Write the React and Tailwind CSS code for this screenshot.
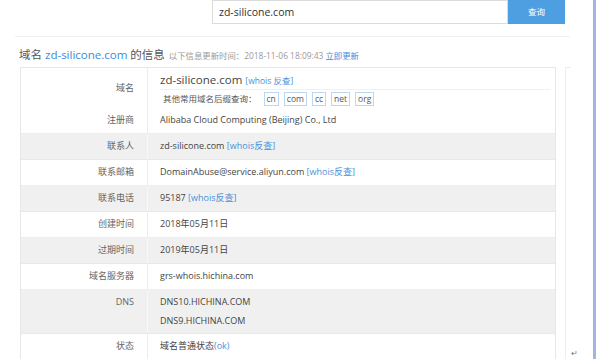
import React from 'react';

const FONT = { fontFamily: '"Open Sans", "Noto Sans CJK SC", sans-serif' };

const rows = [
    { label: '联系人', bg: 'gray', value: <>zd-silicone.com <Link>[whois反查]</Link></> },
    { label: '联系邮箱', bg: 'white', value: <>DomainAbuse@service.aliyun.com <Link>[whois反查]</Link></> },
    { label: '联系电话', bg: 'gray', value: <>95187 <Link>[whois反查]</Link></> },
    { label: '创建时间', bg: 'white', value: '2018年05月11日' },
    { label: '过期时间', bg: 'gray', value: '2019年05月11日' },
    { label: '域名服务器', bg: 'white', value: 'grs-whois.hichina.com' },
];

function Link({ children }) {
    return <span className="text-[#4a90d9]">{children}</span>;
}

function Row({ label, bg, children, tall }) {
    const gray = bg === 'gray';
    return (
        <div className={`flex border-b ${gray ? 'bg-[#f0f0f0] border-[#e9e9e9]' : 'bg-white border-[#eeeeee]'}`}>
            <div
                className={`w-[127px] shrink-0 border-r pr-[13px] text-right text-[9px] text-[#666] ${gray ? 'border-[#f8f8f8]' : 'border-[#ececec]'} ${tall ? 'pt-[2px] leading-[19px]' : 'pb-[1px] leading-[24px]'}`}
            >
                {label}
            </div>
            <div className={`pl-[12px] text-[9px] text-[#444] ${tall ? 'pt-[2px] pb-[3px] leading-[19px]' : 'pb-[1px] leading-[24px]'}`}>
                {children}
            </div>
        </div>
    );
}

export default function App() {
    const suffixes = ['cn', 'com', 'cc', 'net', 'org'];
    return (
        <div className="flex w-[596px] h-[359px] overflow-hidden bg-white" style={FONT}>
            <div className="w-[593px] shrink-0">
                {/* search bar */}
                <div className="flex h-[24px] pl-[212px]">
                    <div className="w-[296px] border border-[#dcdcdc] pl-[6px] text-[10.5px] leading-[22px] text-[#333]">
                        zd-silicone.com
                    </div>
                    <div className="w-[57px] bg-[#4e9fe2] text-center text-[8.5px] leading-[24px] text-white">
                        查询
                    </div>
                </div>

                <div className="mt-[12px] ml-[15px] w-[555px] h-px bg-[#f0f0f0]" />

                {/* title */}
                <div className="flex items-baseline h-[30px] pl-[19px] pt-[10px] whitespace-nowrap text-[11.5px] leading-[16px]">
                    <span className="text-[#555]">
                        域名 <span className="text-[#3a8be0]">zd-silicone.com</span> 的信息
                    </span>
                    <span className="ml-[4px] text-[8.4px] text-[#999]">
                        以下信息更新时间：2018-11-06 18:09:43 <span className="text-[#3a8be0]">立即更新</span>
                    </span>
                </div>

                <div className="flex pl-[20px]">
                    {/* table */}
                    <div className="w-[536px] border-l border-r border-t border-[#e6e6e6]">
                        <div className="flex bg-white">
                            <div className="w-[127px] shrink-0 border-r border-[#ececec] pr-[13px] flex items-center justify-end text-[9px] text-[#666]">
                                域名
                            </div>
                            <div className="flex-1 pl-[12px] pr-[5px] pt-[3px]">
                                <div className="h-[19px] border-b border-[#f0f0f0] text-[11.5px] leading-[18px] whitespace-nowrap">
                                    <span className="text-[#444]">zd-silicone.com</span>{' '}
                                    <span className="text-[8.5px] text-[#4a90d9]">[whois 反查]</span>
                                </div>
                                <div className="flex items-center h-[18px] pl-[3px] text-[8.5px] text-[#555]">
                                    <span className="mr-[7px]">其他常用域名后缀查询：</span>
                                    {suffixes.map(s => (
                                        <span
                                            key={s}
                                            className="mr-[5px] border border-[#bcd7f0] px-[2px] text-[8.5px] leading-[12px] text-[#555]"
                                        >
                                            {s}
                                        </span>
                                    ))}
                                </div>
                            </div>
                        </div>
                        <Row label="注册商" bg="white">Alibaba Cloud Computing (Beijing) Co., Ltd</Row>
                        {rows.map(r => (
                            <Row key={r.label} label={r.label} bg={r.bg}>
                                {r.value}
                            </Row>
                        ))}
                        <Row label="DNS" bg="gray" tall>
                            DNS10.HICHINA.COM
                            <br />
                            DNS9.HICHINA.COM
                        </Row>
                        <Row label="状态" bg="white">
                            域名普通状态<Link>(ok)</Link>
                        </Row>
                    </div>

                    {/* side panel */}
                    <div className="ml-[9px] w-[6px] border-l border-t border-[#eeeeee]" />
                    <div className="flex flex-col justify-end pb-[3px]">
                        <span className="text-[8px] leading-[8px] text-[#777]">↵</span>
                    </div>
                </div>
            </div>
            <div className="w-[3px] bg-[#a0b7e2]" />
        </div>
    );
}
